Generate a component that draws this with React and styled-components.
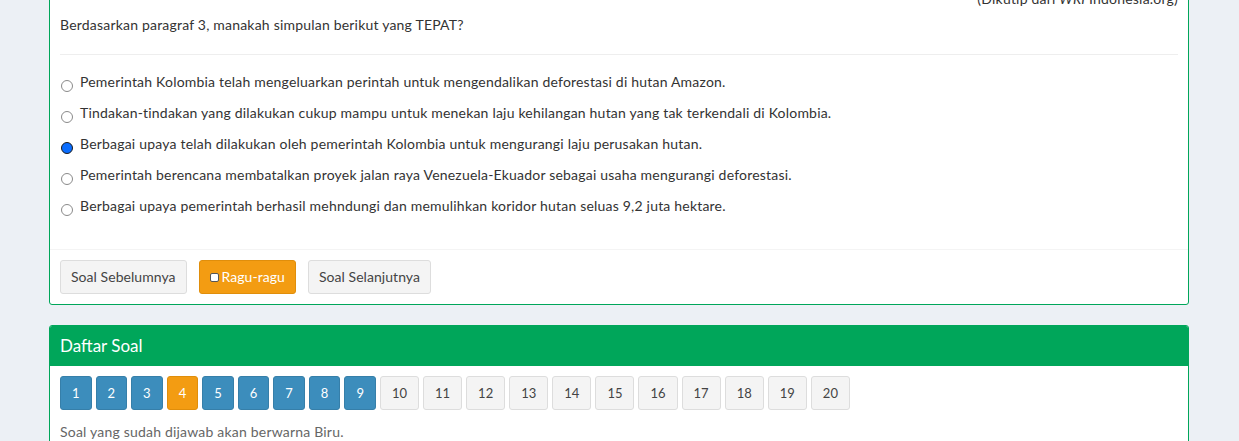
import React from "react";
import styled, { createGlobalStyle } from "styled-components";

const GlobalStyle = createGlobalStyle`
  html, body {
    margin: 0;
    padding: 0;
    background: #ecf0f5;
    overflow: hidden;
  }
  body {
    font-family: Lato, "Open Sans", sans-serif;
    font-size: 14px;
    line-height: 20px;
    letter-spacing: 0.2px;
    color: #333;
  }
`;

const Container = styled.div`
  box-sizing: border-box;
  width: 100%;
  padding: 0 50px 0 49px;
`;

const Box = styled.section`
  background: #fff;
  border: 1px solid #00a65a;
  border-radius: 3px;
  margin-top: ${(p) => p.$mt || 0}px;
  overflow: hidden;
`;

const BoxBody = styled.div`
  padding: 10px;
`;

const Citation = styled.p`
  margin: 0;
  text-align: right;
  color: #333;
`;

const Question = styled.p`
  margin: 6px 0 0;
`;

const Divider = styled.hr`
  border: 0;
  border-top: 1px solid #eee;
  margin: 19px 0 17px;
`;

const OptionList = styled.div`
  display: flex;
  flex-direction: column;
  gap: 11px;
  padding-bottom: 23px;
`;

const Option = styled.label`
  display: flex;
  align-items: flex-start;
  gap: 7px;
  padding-left: 1px;
  cursor: pointer;
`;

const Radio = styled.span`
  flex: none;
  width: 12px;
  height: 12px;
  margin-top: 8px;
  box-sizing: border-box;
  border-radius: 50%;
  border: 1px solid ${(p) => (p.$checked ? "#1b1b1b" : "#8a8a8a")};
  background: ${(p) => (p.$checked ? "#0a6dff" : "#fff")};
`;

const BoxFooter = styled.div`
  border-top: 1px solid #f4f4f4;
  padding: 10px;
  display: flex;
  gap: 12px;
`;

const Button = styled.button`
  font-family: inherit;
  font-size: ${(p) => (p.$small ? 13 : 14)}px;
  letter-spacing: ${(p) => (p.$small ? 0 : 0.05)}px;
  line-height: 20px;
  padding: ${(p) => (p.$small ? "6px 11px" : "6px 10px")};
  border-radius: 3px;
  border: 1px solid
    ${(p) =>
      p.$variant === "warning" ? "#e08e0b" : p.$variant === "primary" ? "#367fa9" : "#ddd"};
  background: ${(p) =>
    p.$variant === "warning" ? "#f39c12" : p.$variant === "primary" ? "#3c8dbc" : "#f4f4f4"};
  color: ${(p) => (p.$variant ? "#fff" : "#444")};
  display: inline-flex;
  align-items: center;
  cursor: pointer;
`;

const Check = styled.span`
  display: inline-block;
  width: 9px;
  height: 9px;
  box-sizing: border-box;
  background: #fff;
  border: 1px solid #555;
  border-radius: 2px;
  margin-right: 3px;
  margin-top: 1px;
`;

const BoxHeader = styled.div`
  background: #00a65a;
  color: #fff;
  padding: 10px;
`;

const BoxTitle = styled.h3`
  margin: 0;
  font-size: 17px;
  font-weight: 400;
  line-height: 20px;
  letter-spacing: 0;
`;

const NumberGrid = styled.div`
  display: flex;
  flex-wrap: wrap;
  gap: 4px;
`;

const Hint = styled.p`
  margin: 12px 0 0;
  color: #666;
`;

const options = [
  "Pemerintah Kolombia telah mengeluarkan perintah untuk mengendalikan deforestasi di hutan Amazon.",
  "Tindakan-tindakan yang dilakukan cukup mampu untuk menekan laju kehilangan hutan yang tak terkendali di Kolombia.",
  "Berbagai upaya telah dilakukan oleh pemerintah Kolombia untuk mengurangi laju perusakan hutan.",
  "Pemerintah berencana membatalkan proyek jalan raya Venezuela-Ekuador sebagai usaha mengurangi deforestasi.",
  "Berbagai upaya pemerintah berhasil mehndungi dan memulihkan koridor hutan seluas 9,2 juta hektare.",
];

const numbers = Array.from({ length: 20 }, (_, i) => i + 1);

export default function App() {
  return (
    <>
      <GlobalStyle />
      <Container>
        <Box $mt={-22}>
          <BoxBody>
            <Citation>
              (Dikutip dari <i>WRI</i> Indonesia.org)
            </Citation>
            <Question>Berdasarkan paragraf 3, manakah simpulan berikut yang TEPAT?</Question>
            <Divider />
            <OptionList>
              {options.map((o, i) => (
                <Option key={i}>
                  <Radio $checked={i === 2} />
                  <span>{o}</span>
                </Option>
              ))}
            </OptionList>
          </BoxBody>
          <BoxFooter>
            <Button>Soal Sebelumnya</Button>
            <Button $variant="warning">
              <Check />
              Ragu-ragu
            </Button>
            <Button>Soal Selanjutnya</Button>
          </BoxFooter>
        </Box>

        <Box $mt={20}>
          <BoxHeader>
            <BoxTitle>Daftar Soal</BoxTitle>
          </BoxHeader>
          <BoxBody>
            <NumberGrid>
              {numbers.map((n) => (
                <Button
                  key={n}
                  $small
                  $variant={n === 4 ? "warning" : n < 10 ? "primary" : undefined}
                >
                  {n}
                </Button>
              ))}
            </NumberGrid>
            <Hint>Soal yang sudah dijawab akan berwarna Biru.</Hint>
          </BoxBody>
        </Box>
      </Container>
    </>
  );
}
